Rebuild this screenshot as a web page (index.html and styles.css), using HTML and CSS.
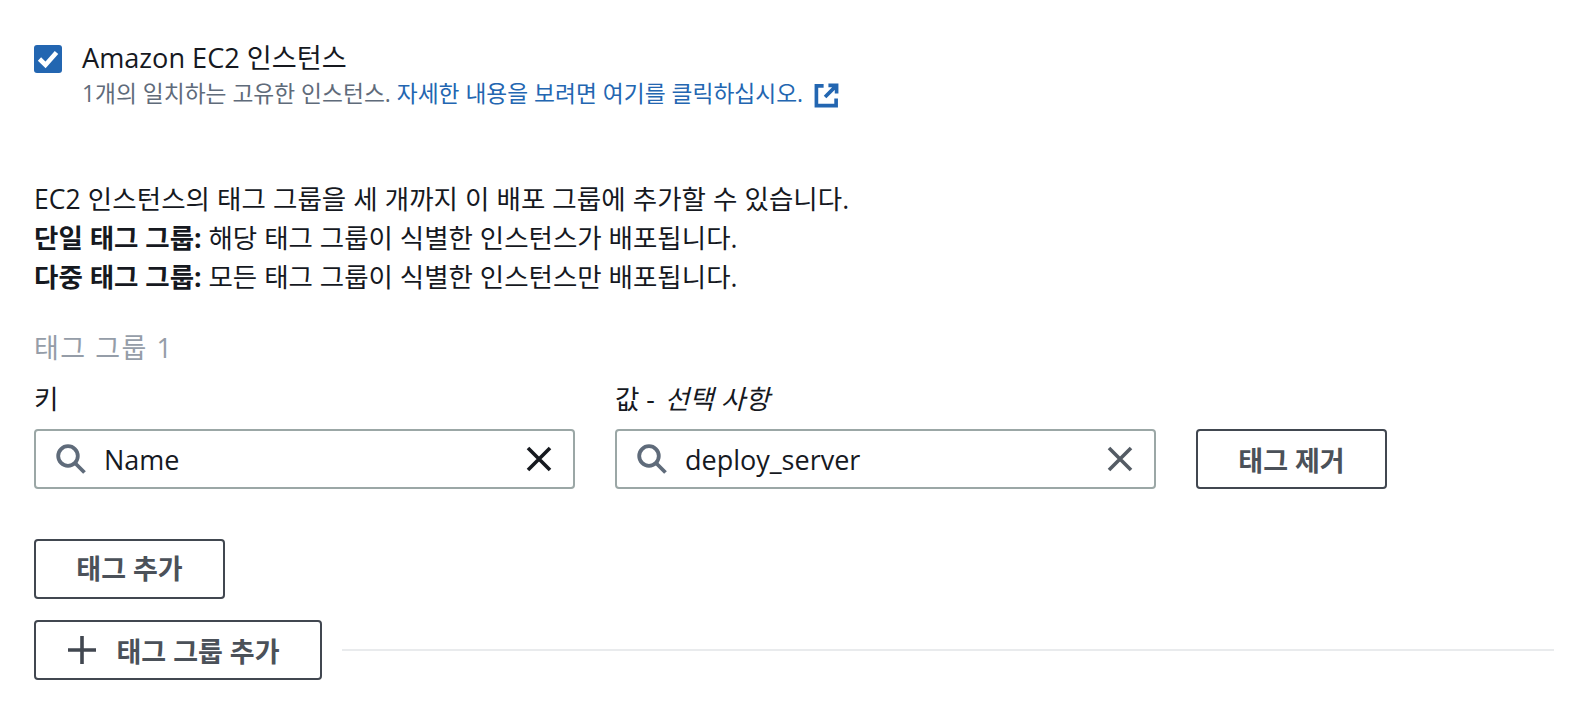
FILE: index.html
```html
<!DOCTYPE html>
<html lang="ko">
<head>
<meta charset="utf-8">
<title>EC2</title>
<link rel="stylesheet" href="styles.css">
</head>
<body>
<main class="page">
  <section class="check-row">
    <span class="checkbox">
      <svg viewBox="0 0 28 28" width="28" height="28"><path d="M5.5 14 11.500 20 22.500 7.500" fill="none" stroke="#fff" stroke-width="4.600"/></svg>
    </span>
    <div class="check-text">
      <div class="check-title">Amazon EC2 인스턴스</div>
      <div class="check-desc">1개의 일치하는 고유한 인스턴스. <a class="link">자세한 내용을 보려면 여기를 클릭하십시오.<svg class="ext" viewBox="0 0 26 26" width="25" height="25"><path d="M10 3H2.5V23.5H23V16M15 2.500H23.500V11M23 3 11.500 14.500" fill="none" stroke="#2366b1" stroke-width="3.800"/></svg></a></div>
    </div>
  </section>
  <section class="intro">
    <p class="lead">EC2 인스턴스의 태그 그룹을 세 개까지 이 배포 그룹에 추가할 수 있습니다.</p>
    <p><b>단일 태그 그룹:</b> 해당 태그 그룹이 식별한 인스턴스가 배포됩니다.</p>
    <p><b>다중 태그 그룹:</b> 모든 태그 그룹이 식별한 인스턴스만 배포됩니다.</p>
  </section>
  <div class="group-title">태그 그룹 1</div>
  <div class="fields">
    <div class="field">
      <div class="label">키</div>
      <div class="input">
        <svg class="search" viewBox="0 0 30 30" width="30" height="30"><circle cx="12" cy="12" r="9.800" fill="none" stroke="#5f6b7a" stroke-width="3.800"/><path d="M19 19 28.500 28.500" stroke="#5f6b7a" stroke-width="3.800"/></svg>
        <span class="value">Name</span>
        <svg class="clear" viewBox="0 0 26 26" width="26" height="26"><path d="M2 2 24 24M24 2 2 24" stroke="#16191f" stroke-width="3.600"/></svg>
      </div>
    </div>
    <div class="field">
      <div class="label">값 - <i>선택 사항</i></div>
      <div class="input">
        <svg class="search" viewBox="0 0 30 30" width="30" height="30"><circle cx="12" cy="12" r="9.800" fill="none" stroke="#5f6b7a" stroke-width="3.800"/><path d="M19 19 28.500 28.500" stroke="#5f6b7a" stroke-width="3.800"/></svg>
        <span class="value">deploy_server</span>
        <svg class="clear" viewBox="0 0 26 26" width="26" height="26"><path d="M2 2 24 24M24 2 2 24" stroke="#545b64" stroke-width="3.600"/></svg>
      </div>
    </div>
    <button class="btn btn-remove">태그 제거</button>
  </div>
  <button class="btn btn-add">태그 추가</button>
  <div class="group-row">
    <button class="btn btn-group">
      <svg viewBox="0 0 28 28" width="28" height="28"><path d="M0 14H28M14 0V28" stroke="#414750" stroke-width="3.600"/></svg>
      태그 그룹 추가
    </button>
    <div class="rule"></div>
  </div>
</main>
</body>
</html>
```
FILE: styles.css
```css
* { box-sizing: border-box; }
html, body { margin: 0; background: #fff; }
body {
  font-family: "Open Sans", "Noto Sans CJK KR", sans-serif;
  color: #16191f;
  font-size: 26.600px;
  line-height: 40px;
}
.page { width: 1592px; height: 714px; overflow: hidden; padding: 45px 38px 0 34px; }
.check-row { display: flex; gap: 20px; height: 106px; }
.checkbox { width: 28px; height: 28px; border-radius: 3px; background: #2366b1; flex: none; }
.checkbox svg { display: block; }
.check-text { margin-top: -5px; }
.check-title { line-height: 36px; font-size: 27.150px; }
.check-desc { font-size: 22.750px; line-height: 36px; color: #5f6b7a; white-space: nowrap; }
.link { color: #2366b1; }
.ext { margin-left: 11px; vertical-align: -6px; }
.intro { margin-top: 29px; font-size: 26.500px; line-height: 39px; }
.intro .lead { letter-spacing: 0.080px; }
.intro p { margin: 0; }
.intro b { font-weight: 700; }
.group-title { margin-top: 31px; color: #959da8; font-size: 27px; letter-spacing: 1.500px; line-height: 40px; }
.fields { display: flex; align-items: flex-end; gap: 40px; margin-top: 11px; }
.field { width: 541px; }
.label { line-height: 40px; margin-bottom: 10px; }
.label i { margin-left: 3px; }
.input {
  height: 60px; display: flex; align-items: center; padding: 0 21px 0 20px;
  border: 2px solid #9ba7a6; border-radius: 4px; font-size: 27px; font-weight: 500;
}
.value { flex: 1; margin-left: 18px; padding-top: 1px; }
.search, .clear { flex: none; display: block; }
.btn {
  height: 60px; display: flex; align-items: center; justify-content: center;
  font-family: inherit; font-size: 27px; font-weight: 700; color: #4b5159;
  background: #fff; border: 2px solid #414750; border-radius: 4px; padding: 0;
}
.btn-remove { width: 191px; }
.btn-add { width: 191px; margin-top: 50px; padding-bottom: 3px; }
.group-row { display: flex; align-items: center; gap: 20px; margin-top: 21px; }
.btn-group { width: 288px; gap: 20px; flex: none; padding-right: 8px; }
.rule { flex: 1; height: 2px; background: #e9ebed; }
```
